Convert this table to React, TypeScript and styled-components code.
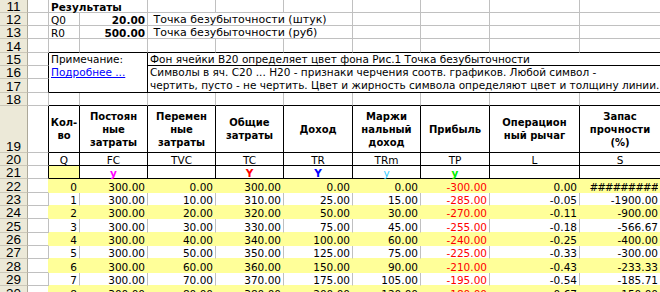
import React from 'react';
import styled, { createGlobalStyle } from 'styled-components';

const GRID = '#c0c0c0';
const INK = '#000';
const YELLOW = '#ffff99';

const COLS = [28, 21, 31, 68, 68, 68, 69, 68, 69, 90, 81];
const ROW_HEIGHTS = [13, 13, 13, 14, 13, 13, 14, 13, 47, 13, 13, 14, 13, 13, 14, 13, 13, 14, 13, 14];
const FIRST_ROW = 11;

type Align = 'left' | 'center' | 'right';
type VAlign = 'top' | 'center' | 'bottom';

const justify = (a?: Align) => (a === 'right' ? 'flex-end' : a === 'center' ? 'center' : 'flex-start');
const vjustify = (a?: VAlign) => (a === 'top' ? 'flex-start' : a === 'center' ? 'center' : 'flex-end');

const GlobalStyle = createGlobalStyle`
  html, body {
    margin: 0;
    padding: 0;
    background: #fff;
    overflow: hidden;
  }
`;

const Sheet = styled.div`
  display: grid;
  grid-template-columns: ${COLS.map((c) => `${c}px`).join(' ')};
  grid-template-rows: ${ROW_HEIGHTS.map((h) => `${h}px`).join(' ')};
  width: ${COLS.reduce((a, b) => a + b, 0)}px;
  font-family: 'DejaVu Sans', Verdana, sans-serif;
  font-size: 10.5px;
  color: #000;
`;

const RowHead = styled.div<{ $row: number }>`
  grid-column: 1;
  grid-row: ${(p) => p.$row - FIRST_ROW + 1};
  box-sizing: border-box;
  background: #ece9d8;
  border-right: 1px solid #aca899;
  border-bottom: 1px solid #cbc7b8;
  display: flex;
  align-items: flex-end;
  justify-content: center;
  font-family: 'Liberation Sans', Arial, sans-serif;
  font-size: 13.5px;
  line-height: 11px;
`;

interface CellProps {
  $col: number;
  $row: number;
  $span?: number;
  $rows?: number;
  $bg?: string;
  $r?: string;
  $b?: string;
  $align?: Align;
  $valign?: VAlign;
  $bold?: boolean;
  $color?: string;
  $size?: number;
}

const Cell = styled.div<CellProps>`
  grid-column: ${(p) => p.$col + 1} / span ${(p) => p.$span ?? 1};
  grid-row: ${(p) => p.$row - FIRST_ROW + 1} / span ${(p) => p.$rows ?? 1};
  box-sizing: border-box;
  background: ${(p) => p.$bg ?? '#fff'};
  border-right: 1px solid ${(p) => p.$r ?? GRID};
  border-bottom: 1px solid ${(p) => p.$b ?? GRID};
  display: flex;
  flex-direction: column;
  align-items: ${(p) => justify(p.$align)};
  justify-content: ${(p) => vjustify(p.$valign)};
  padding: 0 2px;
  white-space: nowrap;
  line-height: 10px;
  font-size: ${(p) => (p.$size ? `${p.$size}px` : 'inherit')};
  font-weight: ${(p) => (p.$bold ? 700 : 400)};
  color: ${(p) => p.$color ?? '#000'};
`;

const HeadText = styled.div`
  font-size: 10px;
  font-weight: 700;
  line-height: 13px;
  text-align: center;
  white-space: pre;
`;

const Line = styled.div`
  height: 13px;
  line-height: 13px;
`;

const Link = styled.a`
  color: #0000ff;
  text-decoration: underline;
  height: 13px;
  line-height: 13px;
`;

const Mark = styled.span<{ $color: string; $bold?: boolean }>`
  color: ${(p) => p.$color};
  font-weight: ${(p) => (p.$bold ? 700 : 400)};
  font-size: 10.5px;
`;

const Hashes = styled.span`
  display: block;
  width: 100%;
  overflow: hidden;
  letter-spacing: -1.2px;
  text-align: right;
`;

// columns A..J -> 1..10
const A = 1;
const B = 2;
const C = 3;
const D = 4;
const J = 10;

const blankCells = (row: number, from: number, to: number, bottom?: string) =>
  Array.from({ length: to - from + 1 }, (_, i) => (
    <Cell key={`${row}-${from + i}`} $row={row} $col={from + i} $b={bottom} />
  ));

const HEADERS = [
  'Кол-\nво',
  'Постоян\nные\nзатраты',
  'Перемен\nные\nзатраты',
  'Общие\nзатраты',
  'Доход',
  'Маржи\nнальный\nдоход',
  'Прибыль',
  'Операцион\nный рычаг',
  'Запас\nпрочности\n(%)',
];

const SYMBOLS = ['Q', 'FC', 'TVC', 'TC', 'TR', 'TRm', 'TP', 'L', 'S'];

const MARKS: Record<number, { ch: string; color: string; bold?: boolean }> = {
  3: { ch: 'y', color: '#ff00ff', bold: true },
  5: { ch: 'Y', color: '#ff0000', bold: true },
  6: { ch: 'Y', color: '#0000ff', bold: true },
  7: { ch: 'y', color: '#33ccff' },
  8: { ch: 'y', color: '#00ee00', bold: true },
};

const FIXED = 300;
const UNIT_COST = 10;
const PRICE = 25;
const BREAK_EVEN_REVENUE = 500;

function rowValues(q: number) {
  const tvc = UNIT_COST * q;
  const tc = FIXED + tvc;
  const tr = PRICE * q;
  const trm = tr - tvc;
  const tp = tr - tc;
  const l = q === 0 ? '0.00' : (trm / tp).toFixed(2);
  const s = q === 0 ? null : (((tr - BREAK_EVEN_REVENUE) / tr) * 100).toFixed(2);
  return [String(q), FIXED.toFixed(2), tvc.toFixed(2), tc.toFixed(2), tr.toFixed(2), trm.toFixed(2), tp.toFixed(2), l, s];
}

export default function App() {
  const rowNumbers = Array.from({ length: ROW_HEIGHTS.length }, (_, i) => FIRST_ROW + i);

  return (
    <>
      <GlobalStyle />
      <Sheet>
        {rowNumbers.map((n) => (
          <RowHead key={`h${n}`} $row={n}>
            {n}
          </RowHead>
        ))}

        {/* results block */}
        <Cell $row={11} $col={A} />
        <Cell $row={11} $col={B} $span={2} $bold>
          Результаты
        </Cell>
        {blankCells(11, D, J)}

        <Cell $row={12} $col={A} />
        <Cell $row={12} $col={B}>Q0</Cell>
        <Cell $row={12} $col={C} $align="right" $bold>
          20.00
        </Cell>
        <Cell $row={12} $col={D} $span={3} $size={11}>
          &nbsp;Точка безубыточности (штук)
        </Cell>
        {blankCells(12, 7, J)}

        <Cell $row={13} $col={A} />
        <Cell $row={13} $col={B}>R0</Cell>
        <Cell $row={13} $col={C} $align="right" $bold>
          500.00
        </Cell>
        <Cell $row={13} $col={D} $span={3} $size={11}>
          &nbsp;Точка безубыточности (руб)
        </Cell>
        {blankCells(13, 7, J)}

        <Cell $row={14} $col={A} />
        {blankCells(14, B, J, INK)}

        {/* note box */}
        <Cell $row={15} $col={A} $r={INK} />
        <Cell $row={16} $col={A} $r={INK} />
        <Cell $row={17} $col={A} $r={INK} />
        <Cell $row={15} $col={B} $span={2} $rows={3} $r={INK} $b={INK} $valign="top">
          <Line>Примечание:</Line>
          <Link href="#">Подробнее ...</Link>
        </Cell>
        <Cell $row={15} $col={D} $span={7} $b={INK} $r="transparent" $valign="top">
          <Line>Фон ячейки B20 определяет цвет фона Рис.1 Точка безубыточности</Line>
        </Cell>
        <Cell $row={16} $col={D} $span={7} $rows={2} $b={INK} $r="transparent" $valign="top">
          <Line>Символы в яч. C20 ... H20 - признаки черчения соотв. графиков. Любой символ -</Line>
          <Line>чертить, пусто - не чертить. Цвет и жирность символа определяют цвет и толщину линии.</Line>
        </Cell>

        <Cell $row={18} $col={A} />
        {blankCells(18, B, J, INK)}

        {/* table header */}
        <Cell $row={19} $col={A} $r={INK} />
        {HEADERS.map((h, i) => (
          <Cell key={`th${i}`} $row={19} $col={B + i} $r={INK} $b={INK} $align="center" $valign="center">
            <HeadText>{h}</HeadText>
          </Cell>
        ))}

        <Cell $row={20} $col={A} $r={INK} />
        {SYMBOLS.map((s, i) => (
          <Cell key={`sym${i}`} $row={20} $col={B + i} $r={INK} $b={INK} $align="center">
            {s}
          </Cell>
        ))}

        <Cell $row={21} $col={A} $r={INK} />
        {SYMBOLS.map((_, i) => {
          const mark = MARKS[B + i];
          return (
            <Cell
              key={`mk${i}`}
              $row={21}
              $col={B + i}
              $r={INK}
              $b={INK}
              $align="center"
              $bg={i === 0 ? YELLOW : undefined}
            >
              {mark && (
                <Mark $color={mark.color} $bold={mark.bold}>
                  {mark.ch}
                </Mark>
              )}
            </Cell>
          );
        })}

        {/* data */}
        {Array.from({ length: 9 }, (_, q) => {
          const row = 22 + q;
          const shaded = q % 2 === 0;
          const bg = shaded ? YELLOW : '#fff';
          const line = shaded ? YELLOW : GRID;
          return (
            <React.Fragment key={`r${row}`}>
              <Cell $row={row} $col={A} $r={line} />
              {rowValues(q).map((v, i) => (
                <Cell
                  key={`d${row}-${i}`}
                  $row={row}
                  $col={B + i}
                  $bg={bg}
                  $r={i === 8 ? bg : line}
                  $b={YELLOW}
                  $align="right"
                  $color={i === 6 ? '#ff0000' : undefined}
                >
                  {v === null ? <Hashes>#########</Hashes> : v}
                </Cell>
              ))}
            </React.Fragment>
          );
        })}
      </Sheet>
    </>
  );
}
